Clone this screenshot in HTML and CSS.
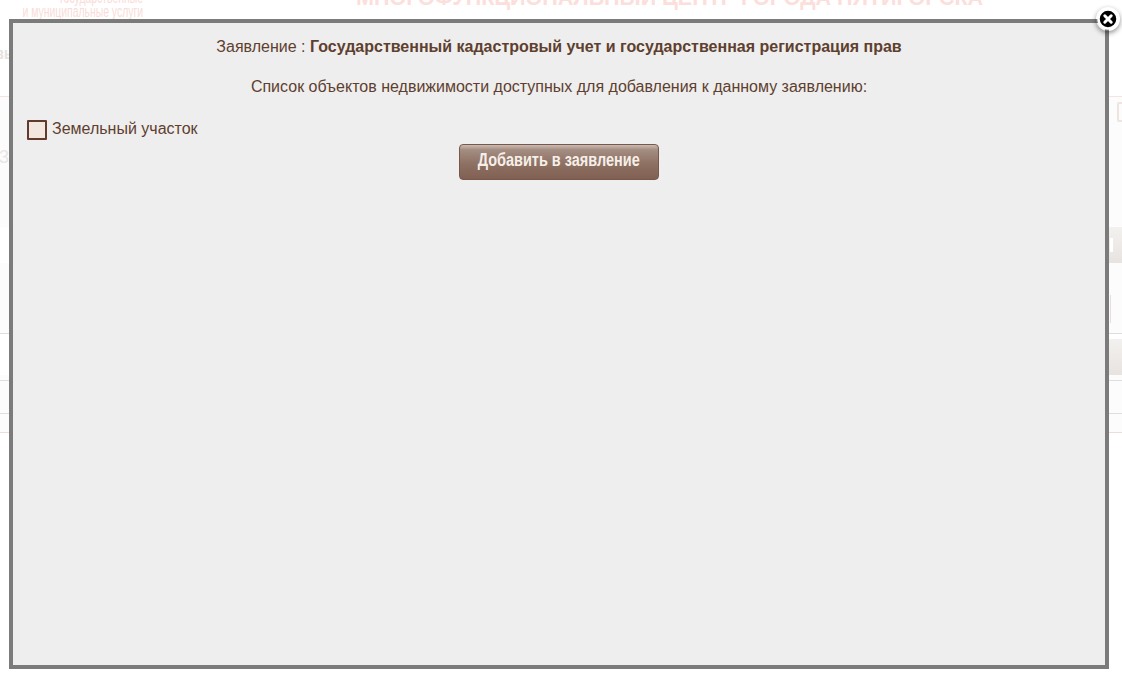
FILE: index.html
```html
<!DOCTYPE html>
<html lang="ru">
<head>
<meta charset="utf-8">
<title>Заявление</title>
<link rel="stylesheet" href="styles.css">
</head>
<body>
<div class="page">
  <header class="site-header">
    <div class="logo-text">
      <div>государственные</div>
      <div>и муниципальные услуги</div>
    </div>
    <div class="site-title">МНОГОФУНКЦИОНАЛЬНЫЙ ЦЕНТР ГОРОДА ПЯТИГОРСКА</div>
    <div class="nav-stub">вы</div>
  </header>
  <main class="site-main">
    <div class="top-area">
      <div class="digit">3</div>
      <div class="field-stub"></div>
    </div>
    <div class="band"><span class="band-mark"></span></div>
    <div class="row-a"><span class="box-stub"></span></div>
    <div class="band band-b"></div>
    <div class="row-b"></div>
    <div class="row-c"></div>
    <div class="row-d"></div>
  </main>
</div>

<div class="modal">
  <p class="modal-title">Заявление : <b>Государственный кадастровый учет и государственная регистрация прав</b></p>
  <p class="modal-sub">Список объектов недвижимости доступных для добавления к данному заявлению:</p>
  <label class="check-row"><span class="check"></span><span>Земельный участок</span></label>
  <div class="actions"><button class="add-btn" type="button"><span class="add-label">Добавить в заявление</span></button></div>
  <div class="close-btn">
    <svg width="24" height="24" viewBox="0 0 24 24" aria-hidden="true">
      <circle cx="12" cy="12" r="9.5" fill="#000" stroke="#fff" stroke-width="2.5"/>
      <path d="M8.8 8.8l6.4 6.4M15.2 8.8l-6.4 6.4" stroke="#fff" stroke-width="3" stroke-linecap="round"/>
    </svg>
  </div>
</div>
</body>
</html>
```
FILE: styles.css
```css
* { box-sizing: border-box; }
html, body { margin: 0; height: 100%; overflow: hidden; background: #fff; }
body { font-family: "Liberation Sans", Arial, sans-serif; color: #5f3f2f; }

.page { height: 682px; overflow: hidden; display: flex; flex-direction: column; }
.site-header { height: 97px; flex: none; border-bottom: 1px solid #f3e4e0; display: flex; position: relative; }
.logo-text {
  width: 300px; margin-left: -157px; flex: none; margin-top: -9px; text-align: right; white-space: nowrap;
  font-size: 16px; line-height: 14px; color: #f9dcd8;
  transform: scaleX(.65); transform-origin: right top;
}
.site-title {
  margin: -15px 0 0 213px; font-size: 21.5px; line-height: 26px; height: 26px; white-space: nowrap;
  font-weight: 700; color: #fcdedb;
}
.nav-stub {
  position: absolute; left: -8px; top: 45px; font-size: 16px; font-weight: 700; color: #e6e1de;
  transform: scaleX(.85); transform-origin: right top;
}

.site-main { flex: 1; background: #fff; display: flex; flex-direction: column; }
.top-area { height: 130px; flex: none; position: relative; background: #fcfcfc; }
.digit { position: absolute; left: -1px; top: 50px; font-size: 18px; color: #e9e6e4; }
.field-stub { position: absolute; left: 1117px; top: 5px; width: 20px; height: 20px; border: 2px solid #eee4e0; border-radius: 2px; }
.band {
  height: 36px; flex: none; position: relative; margin-left: 40px;
  background: linear-gradient(#f3f1ef, #e7e3e0);
}
.band-mark { position: absolute; left: 1070px; top: 11px; width: 3px; height: 14px; background: #fff; }
.row-a { height: 71px; flex: none; border-bottom: 1px solid #dedede; position: relative; background: #fcfcfc; }
.box-stub { position: absolute; left: 1109px; top: 32px; width: 2px; height: 28px; border-right: 1px solid #e6e0dc; }
.band-b { margin-top: 5px; }
.row-b { height: 6px; flex: none; border-bottom: 1px solid #dedede; background: #fcfcfc; }
.row-c { height: 33px; flex: none; border-bottom: 1px solid #dedede; background: #fcfcfc; }
.row-d { height: 19px; flex: none; border-bottom: 1px solid #eadfdb; background: #fcfcfc; }

.modal {
  position: absolute; left: 9px; top: 19px; width: 1100px; height: 650px;
  border: 4px solid #7b7b7b; background: #eee; padding: 14px 14px 0;
  font-size: 16px; line-height: 20px;
}
.modal-title, .modal-sub { margin: 0; text-align: center; }
.modal-sub { margin-top: 20px; }
.check-row { display: flex; align-items: flex-start; gap: 5px; margin-top: 22px; height: 25px; }
.check {
  width: 20px; height: 20px; margin-top: 1px; flex: none;
  border: 2px solid #633a2c; background: #f3e8df; border-radius: 1px;
}
.actions { display: flex; justify-content: center; }
.add-btn {
  width: 200px; height: 36px; padding: 0; border: 1px solid #77584a; border-radius: 4px;
  background: linear-gradient(#cbbbb3 0, #a48d82 14%, #8e7163 55%, #806052 100%);
  color: #f6efe9; font-family: "Liberation Sans", sans-serif;
  font-weight: 700; font-size: 18px; line-height: 30px; white-space: nowrap;
  display: flex; justify-content: center; overflow: hidden;
}
.add-label { display: inline-block; transform: scaleX(.805); flex: none; }
.close-btn {
  position: absolute; right: -15px; top: -16px; width: 24px; height: 24px;
  border-radius: 50%; box-shadow: 0 2px 5px rgba(0,0,0,.45);
}
.close-btn svg { display: block; }
```
